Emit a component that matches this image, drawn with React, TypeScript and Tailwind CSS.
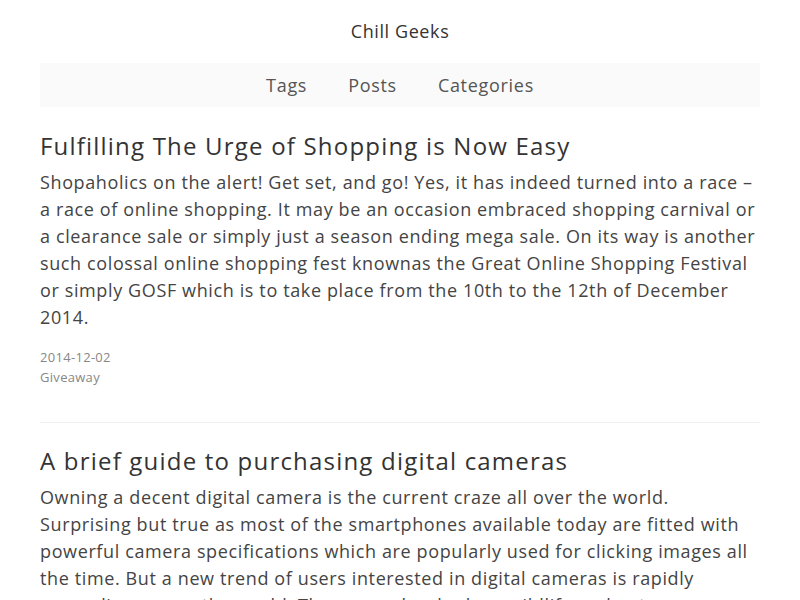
const posts = [
  {
    title: "Fulfilling The Urge of Shopping is Now Easy",
    body:
      "Shopaholics on the alert! Get set, and go! Yes, it has indeed turned into a race – a race of online shopping. It may be an occasion embraced shopping carnival or a clearance sale or simply just a season ending mega sale. On its way is another such colossal online shopping fest knownas the Great Online Shopping Festival or simply GOSF which is to take place from the 10th to the 12th of December 2014.",
    date: "2014-12-02",
    category: "Giveaway",
  },
  {
    title: "A brief guide to purchasing digital cameras",
    body:
      "Owning a decent digital camera is the current craze all over the world. Surprising but true as most of the smartphones available today are fitted with powerful camera specifications which are popularly used for clicking images all the time. But a new trend of users interested in digital cameras is rapidly expanding across the world. These people who love wildlife and nature photography want a real camera.",
    date: "2014-11-20",
    category: "Gadgets",
  },
];

export default function App() {
  return (
    <div className="min-h-screen bg-white font-['Open_Sans',sans-serif] text-[#333]">
      <div className="max-w-[720px] mx-auto">
        <header className="h-[63px] flex items-center justify-center">
          <a className="text-[18px] tracking-[0.6px] text-[#333]">Chill Geeks</a>
        </header>
        <nav className="h-[44px] bg-[#fafafa] flex items-center justify-center gap-[41px] text-[18px] tracking-[0.7px] text-[#555]">
          <a>Tags</a>
          <a>Posts</a>
          <a>Categories</a>
        </nav>
        <main className="pt-[24px]">
          {posts.map((post, i) => (
            <article key={i} className={i > 0 ? "border-t border-[#eee] pt-[23px]" : "pb-[35px]"}>
              <h2 className="text-[24px] leading-[30px] font-medium tracking-[1.2px] text-[#333] mb-[8px]">{post.title}</h2>
              <p className="text-[18px] leading-[27px] tracking-[0.62px] text-[#444]">{post.body}</p>
              <div className="mt-[16px] text-[13px] leading-[20px] tracking-[0.3px] text-[#888]">
                <div>{post.date}</div>
                <div>{post.category}</div>
              </div>
            </article>
          ))}
        </main>
      </div>
    </div>
  );
}
